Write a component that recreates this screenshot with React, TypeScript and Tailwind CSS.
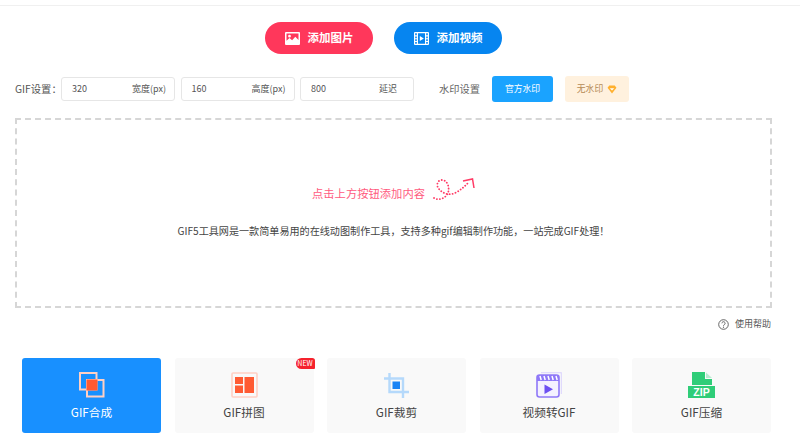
import React from "react";

const ImgIcon = () => (
  <svg width="15" height="13" viewBox="0 0 15 13">
    <path fillRule="evenodd" fill="#fff" d="M0 1a1 1 0 0 1 1-1h13a1 1 0 0 1 1 1v11a1 1 0 0 1-1 1H1a1 1 0 0 1-1-1ZM1.500 1.500v7.200l3-2.700 2.600 2.200 3.200-3.400 3.200 3.200V1.500ZM4.500 2.800a1.400 1.400 0 1 0 0 2.800 1.400 1.400 0 0 0 0-2.800Z" />
  </svg>
);

const VidIcon = () => (
  <svg width="15" height="13" viewBox="0 0 15 13">
    <path fillRule="evenodd" fill="#fff" d="M1 0h13a1 1 0 0 1 1 1v11a1 1 0 0 1-1 1H1a1 1 0 0 1-1-1V1a1 1 0 0 1 1-1ZM1.200 1.200v2h1.600v-2ZM1.200 4.400v1.800h1.600V4.400ZM1.200 7.200V9h1.600V7.200ZM1.200 10v1.800h1.600V10ZM12.200 1.200v2h1.600v-2ZM12.200 4.400v1.800h1.600V4.400ZM12.200 7.200V9h1.600V7.200ZM12.200 10v1.800h1.600V10ZM4 1.200v10.600h7V1.200ZM5.800 4l4 2.500-4 2.500Z" />
  </svg>
);

const Field = ({ value, unit, wide }: { value: string; unit: string; wide?: boolean }) => (
  <div className={wide ? "flex h-[24px] w-[114px] items-center justify-between rounded-[3px] border border-[#e6e6e6] bg-white pl-[10px] pr-[16px] text-[9px] text-[#555]" : "flex h-[24px] w-[114px] items-center justify-between rounded-[3px] border border-[#e6e6e6] bg-white pl-[10px] pr-[8px] text-[9px] text-[#555]"}>
    <span className="text-[9px]">{value}</span>
    <span>{unit}</span>
  </div>
);

const Merge = () => (
  <svg width="26" height="26" viewBox="0 0 26 26">
    <rect x="8" y="8" width="16.500" height="16.500" fill="none" stroke="#ffd0c4" strokeWidth="2" />
    <rect x="1" y="1" width="16.500" height="16.500" fill="none" stroke="#ffd0c4" strokeWidth="2" />
    <rect x="7.500" y="7.500" width="11" height="11" fill="#ff5a32" />
  </svg>
);

const Collage = () => (
  <svg width="27" height="26" viewBox="0 0 27 26">
    <rect x="1" y="1" width="25" height="24" rx="1" fill="none" stroke="#ffd0c4" strokeWidth="1.600" />
    <rect x="4" y="5" width="8" height="7" fill="#ff5a32" />
    <rect x="4" y="13.500" width="8" height="7.500" fill="#ff5a32" />
    <rect x="13.500" y="5" width="9.500" height="16" fill="#ff5a32" />
  </svg>
);

const Crop = () => (
  <svg width="25" height="25" viewBox="0 0 25 25">
    <path d="M0 5.500H19V25M5.500 0V19H25" fill="none" stroke="#b5d9fb" strokeWidth="2.400" />
    <rect x="8.500" y="8.500" width="7.500" height="7.500" fill="#1a84f5" />
  </svg>
);

const Video = () => (
  <svg width="26" height="26" viewBox="0 0 26 26">
    <path d="M5 0.500H24a1.500 1.500 0 0 1 1.500 1.500V22" fill="none" stroke="#e0dafc" strokeWidth="1.500" />
    <rect x="1" y="3" width="22" height="22" rx="2.500" fill="#f4f1ff" stroke="#8f78f8" strokeWidth="1.600" />
    <rect x="1" y="3" width="22" height="6" fill="#8f78f8" />
    <path d="M4 4l1.200 4M8 4l1.200 4M12 4l1.200 4M16 4l1.200 4M20 4l1.200 4" stroke="#fff" strokeWidth="1.500" />
    <path d="M8.500 12.500l8.500 4.800-8.500 4.700Z" fill="#6d4ff2" />
  </svg>
);

const Zip = () => (
  <svg width="27" height="26" viewBox="0 0 27 26">
    <path d="M4 0H17V7H24V13H4Z" fill="#2fcd78" />
    <path d="M18 0.500L24 6H18Z" fill="#b7ecd0" />
    <rect x="0" y="14" width="27" height="12" fill="#2fcd78" />
    <text x="13.500" y="24" textAnchor="middle" fill="#fff" fontSize="10.500" fontWeight="700" fontFamily="'Liberation Sans',sans-serif">ZIP</text>
  </svg>
);

const Card = ({ icon, label, active, badge }: { icon: React.ReactNode; label: string; active?: boolean; badge?: boolean }) => (
  <div className={active ? "relative flex h-[75px] w-[139px] flex-col items-center rounded-[3px] bg-[#1890ff] pt-[14px] text-white" : "relative flex h-[75px] w-[139px] flex-col items-center rounded-[3px] bg-[#f9f9f9] pt-[14px] text-[#444]"}>
    <div className="flex h-[26px] items-center justify-center">{icon}</div>
    <div className="mt-[5px] text-[11.700px] leading-[18px]">{label}</div>
    {badge && (
      <div className="absolute right-[-1px] top-0 flex h-[11px] w-[19px] items-center justify-center rounded-l-[6px] rounded-tr-[3px] rounded-br-[1px] bg-[#f5222d] text-[7px] leading-none text-white">NEW</div>
    )}
  </div>
);

export default function App() {
  return (
    <div className="h-[448px] w-[800px] overflow-hidden bg-white pt-[5px] font-['Noto_Sans_CJK_SC','Noto_Sans',sans-serif]">
      <div className="h-px bg-[#f0f0f0]" />
      <div className="mt-[16px] flex w-[767px] justify-center gap-[21px]">
        <button className="flex h-[32px] w-[108px] items-center justify-center gap-[8px] rounded-full bg-[#ff375b] text-[11.500px] font-bold text-white"><ImgIcon />添加图片</button>
        <button className="flex h-[32px] w-[108px] items-center justify-center gap-[8px] rounded-full bg-[#0685f0] text-[11.500px] font-bold text-white"><VidIcon />添加视频</button>
      </div>
      <div className="mt-[22px] flex h-[26px] items-center pl-[15px]">
        <span className="w-[46px] whitespace-nowrap text-[10.300px] text-[#555]">{"GIF设置\uFF1A"}</span>
        <div className="flex gap-[5.500px]">
          <Field value="320" unit="宽度(px)" />
          <Field value="160" unit="高度(px)" />
          <Field value="800" unit="延迟" wide />
        </div>
        <span className="ml-[25px] w-[41px] whitespace-nowrap text-[10.250px] text-[#666]">水印设置</span>
        <button className="ml-[12px] h-[26px] w-[61px] rounded-[3px] bg-[#1aa3ff] text-[8.800px] text-white">官方水印</button>
        <button className="ml-[12px] flex h-[26px] w-[64px] items-center justify-center gap-[4px] rounded-[3px] bg-[#fff1de] text-[8.800px] text-[#b58a55]">
          无水印
          <svg width="10" height="9" viewBox="0 0 9 8"><path d="M2 0.500H7L8.500 2.500L4.500 7.500L0.500 2.500Z" fill="#ffb02e" /><path d="M2.500 2.800H6.500L4.500 5Z" fill="#fff" /></svg>
        </button>
      </div>
      <div className="ml-[15px] mt-[16px] flex h-[190px] w-[757px] flex-col items-center border-2 border-dashed border-[#d6d6d6] pt-[56px]">
        <div className="flex h-[34px] items-center">
          <span className="text-[11.300px] text-[#ff5a7e]">点击上方按钮添加内容</span>
          <svg className="ml-[8px] mb-[6px]" width="42" height="24" viewBox="0 0 42 24">
            <path d="M1 20C6 23 13 20 15 15C17 9 14 2 9 2C4 2 3 8 6 11C9 15 16 18 22 15C28 12 32 8 36 4" fill="none" stroke="#ff3b66" strokeWidth="1.800" strokeDasharray="0.100 2.900" strokeLinecap="round" />
            <path d="M30 3L39.500 1L41 10" fill="none" stroke="#ff3b66" strokeWidth="1.500" />
          </svg>
        </div>
        <div className="mt-[13px] text-[10.100px] leading-[16px] text-[#444]">{"GIF5工具网是一款简单易用的在线动图制作工具\uFF0C支持多种gif编辑制作功能\uFF0C一站完成GIF处理\uFF01"}</div>
      </div>
      <div className="mr-[29px] mt-[8px] flex h-[16px] items-center justify-end gap-[6px] text-[9px] text-[#555]">
        <svg width="11" height="11" viewBox="0 0 11 11"><circle cx="5.500" cy="5.500" r="4.800" fill="none" stroke="#555" strokeWidth="0.900" /><path d="M3.900 4.300a1.600 1.600 0 1 1 2.400 1.400c-.6.300-.8.600-.8 1.100" fill="none" stroke="#555" strokeWidth="0.900" /><circle cx="5.500" cy="8.200" r="0.600" fill="#555" /></svg>
        使用帮助
      </div>
      <div className="ml-[22px] mt-[26px] flex w-[749px] justify-between">
        <Card icon={<Merge />} label="GIF合成" active />
        <Card icon={<Collage />} label="GIF拼图" badge />
        <Card icon={<Crop />} label="GIF裁剪" />
        <Card icon={<Video />} label="视频转GIF" />
        <Card icon={<Zip />} label="GIF压缩" />
      </div>
    </div>
  );
}
